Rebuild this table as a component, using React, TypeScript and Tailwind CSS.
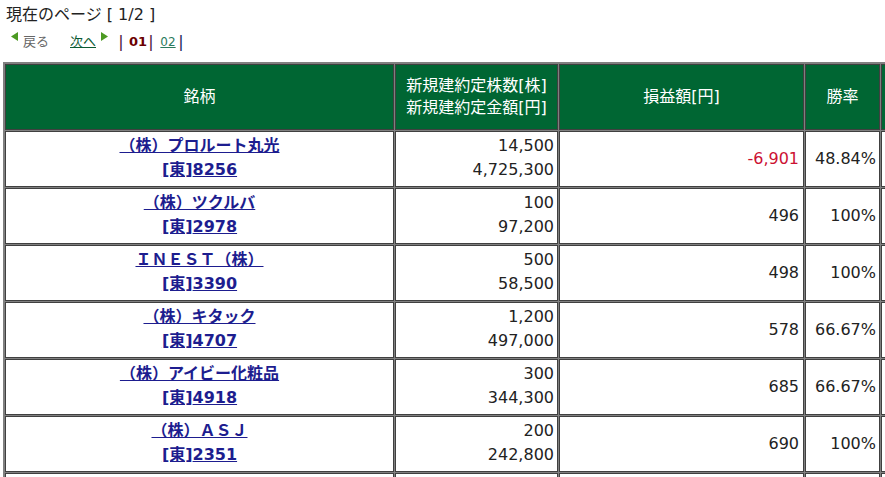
import React from "react";

type Row = {
  name: string;
  code: string;
  qty: string;
  amt: string;
  pl: string;
  neg?: boolean;
  rate: string;
};

const rows: Row[] = [
  { name: "（株）プロルート丸光", code: "8256", qty: "14,500", amt: "4,725,300", pl: "-6,901", neg: true, rate: "48.84%" },
  { name: "（株）ツクルバ", code: "2978", qty: "100", amt: "97,200", pl: "496", rate: "100%" },
  { name: "ＩＮＥＳＴ（株）", code: "3390", qty: "500", amt: "58,500", pl: "498", rate: "100%" },
  { name: "（株）キタック", code: "4707", qty: "1,200", amt: "497,000", pl: "578", rate: "66.67%" },
  { name: "（株）アイビー化粧品", code: "4918", qty: "300", amt: "344,300", pl: "685", rate: "66.67%" },
  { name: "（株）ＡＳＪ", code: "2351", qty: "200", amt: "242,800", pl: "690", rate: "100%" },
];

function LeftTri() {
  return (
    <svg width="7" height="9" viewBox="0 0 7 9" className="block">
      <path d="M7 0 L0 4.5 L7 9 Z" fill="#4c9a22" />
    </svg>
  );
}

function RightTri() {
  return (
    <svg width="7" height="9" viewBox="0 0 7 9" className="block">
      <path d="M0 0 L7 4.5 L0 9 Z" fill="#4c9a22" />
    </svg>
  );
}

const th =
  "h-[66px] p-0 border border-[#404040] bg-[#006633] text-white font-normal text-[16px] leading-[22px] text-center";

export default function App() {
  return (
    <div className="w-[885px] h-[477px] overflow-hidden bg-white font-['DejaVu_Sans','Noto_Sans_CJK_JP',sans-serif] text-[#222]">
      <div className="pl-[6px] pt-[3px] text-[16px] leading-[24px] h-[27px]">現在のページ [ 1/2 ]</div>
      <div className="flex items-start h-[35px] pl-[11px]">
        <div className="mt-[5px]">
          <LeftTri />
        </div>
        <div className="ml-[5px] w-[47px] pt-[5px] text-[13px] leading-[20px] text-[#666]">戻る</div>
        <div className="w-[31px] pt-[5px] text-[13px] leading-[20px]">
          <a href="#" className="text-[#0b5a33] underline">次へ</a>
        </div>
        <div className="mt-[5px]">
          <RightTri />
        </div>
        <div className="ml-[9px] w-[8px] pt-[4px] text-center text-[16px] leading-[22px] text-[#4a1240]">|</div>
        <div className="ml-[4px] w-[18px] pt-[5px] text-center text-[13px] leading-[20px] font-bold text-[#6b0000]">01</div>
        <div className="w-[8px] pt-[4px] text-center text-[16px] leading-[22px] text-[#4a1240]">|</div>
        <div className="ml-[4px] w-[18px] pt-[5px] text-center text-[12px] leading-[20px]">
          <a href="#" className="text-[#2a7a5c] underline">02</a>
        </div>
        <div className="w-[8px] pt-[4px] text-center text-[16px] leading-[22px] text-[#1a1a5a]">|</div>
      </div>
      <table className="ml-[3px] w-[980px] table-fixed border-separate border-spacing-[1px] border border-[#808080] bg-[#808080]">
        <thead>
          <tr>
            <th className={`w-[389px] ${th}`}>銘柄</th>
            <th className={`w-[163px] ${th}`}>
              新規建約定株数[株]
              <br />
              新規建約定金額[円]
            </th>
            <th className={`w-[245px] ${th}`}>損益額[円]</th>
            <th className={`w-[75px] ${th}`}>勝率</th>
            <th className={`w-[100px] ${th}`}>&nbsp;</th>
          </tr>
        </thead>
        <tbody>
          {rows.map((r) => (
            <tr key={r.code}>
              <td className="h-[56px] p-0 pb-[2px] border border-[#404040] bg-white text-center text-[16px] leading-[24px] font-bold text-[#1d1d8f]">
                <a href="#" className="underline text-[#1d1d8f]">{r.name}</a>
                <br />
                <a href="#" className="underline text-[#1d1d8f]">[東]</a>
                <a href="#" className="underline text-[#1d1d8f]">{r.code}</a>
              </td>
              <td className="h-[56px] p-0 pr-[3px] pb-[2px] border border-[#404040] bg-white text-right text-[16px] leading-[24px]">
                {r.qty}
                <br />
                {r.amt}
              </td>
              <td className={`h-[56px] p-0 pr-[4px] border border-[#404040] bg-white text-right text-[16px] leading-[24px] ${r.neg ? "text-[#cc1133]" : "text-[#222]"}`}>
                {r.pl}
              </td>
              <td className="h-[56px] p-0 pr-[3px] border border-[#404040] bg-white text-right text-[16px] leading-[24px]">
                {r.rate}
              </td>
              <td className="h-[56px] p-0 border border-[#404040] bg-white"></td>
            </tr>
          ))}
          <tr>
            <td className="h-[56px] p-0 border border-[#404040] bg-white"></td>
            <td className="h-[56px] p-0 border border-[#404040] bg-white"></td>
            <td className="h-[56px] p-0 border border-[#404040] bg-white"></td>
            <td className="h-[56px] p-0 border border-[#404040] bg-white"></td>
            <td className="h-[56px] p-0 border border-[#404040] bg-white"></td>
          </tr>
        </tbody>
      </table>
    </div>
  );
}
